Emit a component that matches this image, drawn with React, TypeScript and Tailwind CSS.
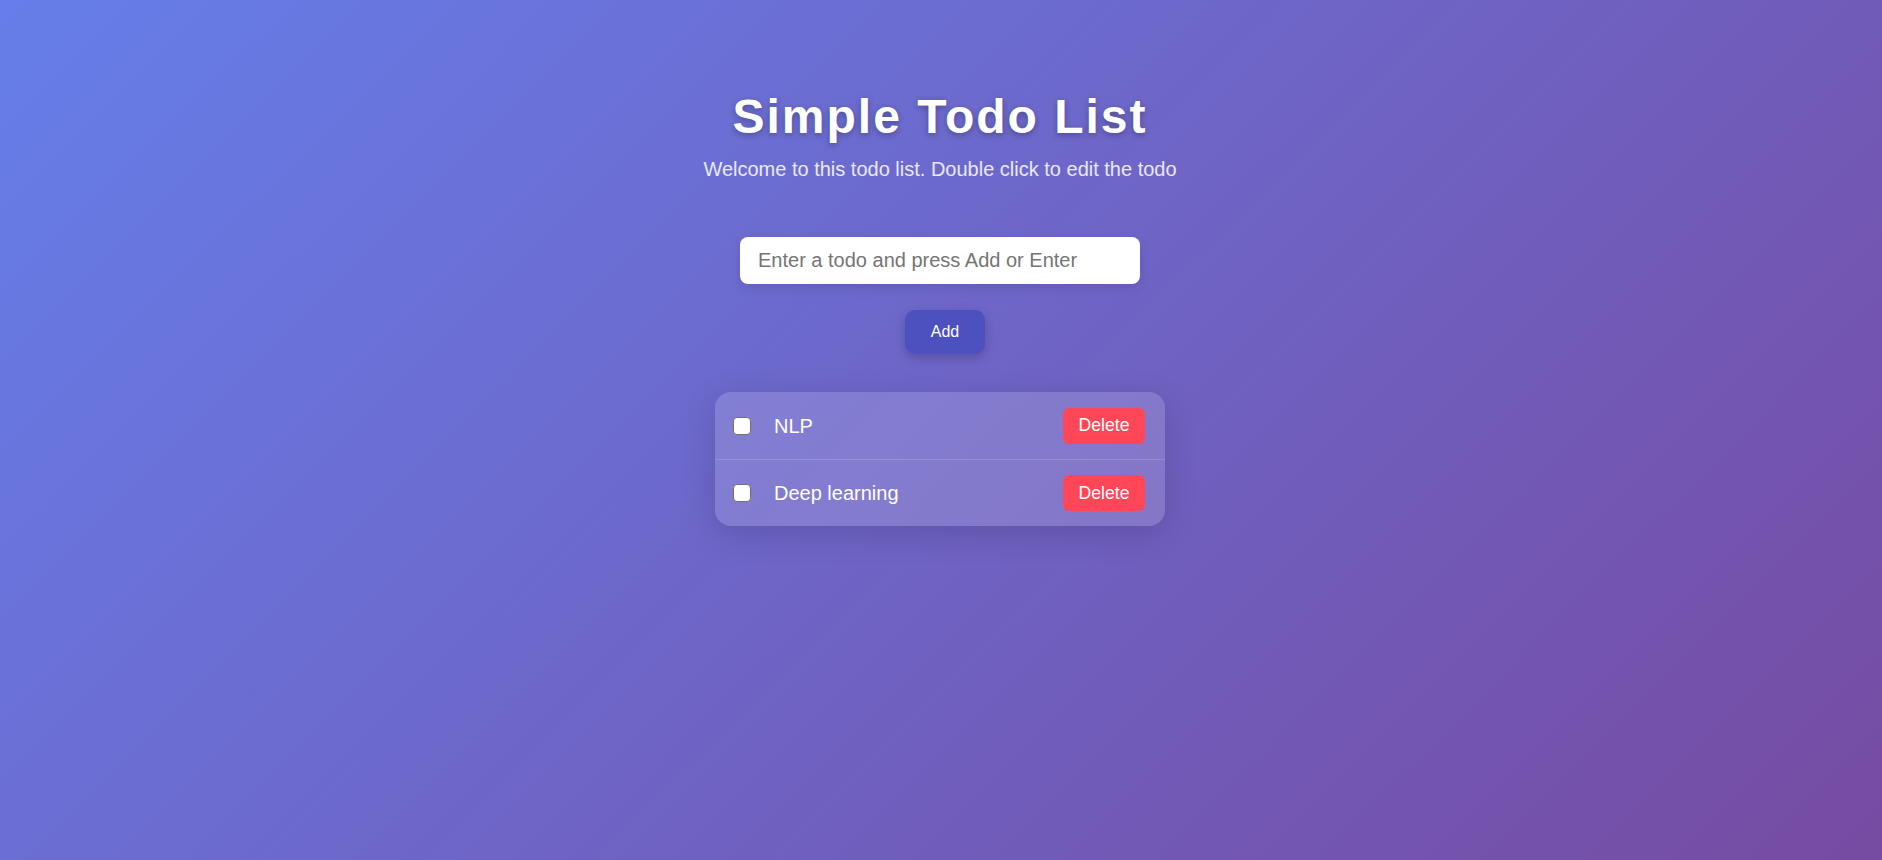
import { useState } from 'react';

interface Todo {
  id: number;
  text: string;
  done: boolean;
}

export default function App() {
  const [todos, setTodos] = useState<Todo[]>([
    { id: 1, text: 'NLP', done: false },
    { id: 2, text: 'Deep learning', done: false },
  ]);
  const [value, setValue] = useState('');

  const addTodo = () => {
    const text = value.trim();
    if (!text) return;
    setTodos((t) => [...t, { id: Date.now(), text, done: false }]);
    setValue('');
  };

  return (
    <div className="min-h-screen w-full bg-[linear-gradient(135deg,#667eea_0%,#764ba2_100%)] font-['Liberation_Sans',Arial,sans-serif] text-white">
      <div className="flex flex-col items-center pt-[89px] pr-[2px]">
        {/* Header */}
        <h1 className="text-[48px] leading-[55px] font-bold tracking-[2px] [text-shadow:0_2px_6px_rgba(0,0,0,0.3)]">
          Simple Todo List
        </h1>
        <p className="mt-[14px] text-[20px] leading-[23px] text-white/85">
          Welcome to this todo list. Double click to edit the todo
        </p>

        {/* Input */}
        <input
          value={value}
          onChange={(e) => setValue(e.target.value)}
          onKeyDown={(e) => e.key === 'Enter' && addTodo()}
          placeholder="Enter a todo and press Add or Enter"
          className="mt-[56px] w-[400px] h-[47px] rounded-lg bg-white px-[18px] text-[20px] text-[#333] placeholder:text-[#757575] outline-none shadow-[0_4px_12px_rgba(0,0,0,0.1)]"
        />

        <button
          onClick={addTodo}
          className="mt-[26px] ml-[10px] h-[44px] w-[80px] rounded-[10px] bg-[#4c51bf] text-[16px] text-white shadow-[0_4px_12px_rgba(0,0,0,0.2)]"
        >
          Add
        </button>

        {/* List */}
        <ul className="mt-[38px] w-[450px] rounded-2xl bg-white/15 shadow-[0_8px_32px_rgba(0,0,0,0.15)] overflow-hidden">
          {todos.map((todo, i) => (
            <li
              key={todo.id}
              className={`flex items-center h-[67px] pl-[18px] pr-5 ${i > 0 ? 'border-t border-white/15' : ''}`}
            >
              <input
                type="checkbox"
                checked={todo.done}
                onChange={() =>
                  setTodos((t) => t.map((x) => (x.id === todo.id ? { ...x, done: !x.done } : x)))
                }
                className="appearance-none w-[18px] h-[18px] m-0 shrink-0 rounded-[4px] border-[1.5px] border-[#707070] bg-white checked:bg-[#0075ff] checked:border-[#0075ff]"
              />
              <span className={`ml-[23px] flex-1 text-[20px] ${todo.done ? 'line-through opacity-60' : ''}`}>
                {todo.text}
              </span>
              <button
                onClick={() => setTodos((t) => t.filter((x) => x.id !== todo.id))}
                className="h-[36px] w-[82px] rounded-md bg-[#ff4757] text-[17.6px] text-white"
              >
                Delete
              </button>
            </li>
          ))}
        </ul>
      </div>
    </div>
  );
}
